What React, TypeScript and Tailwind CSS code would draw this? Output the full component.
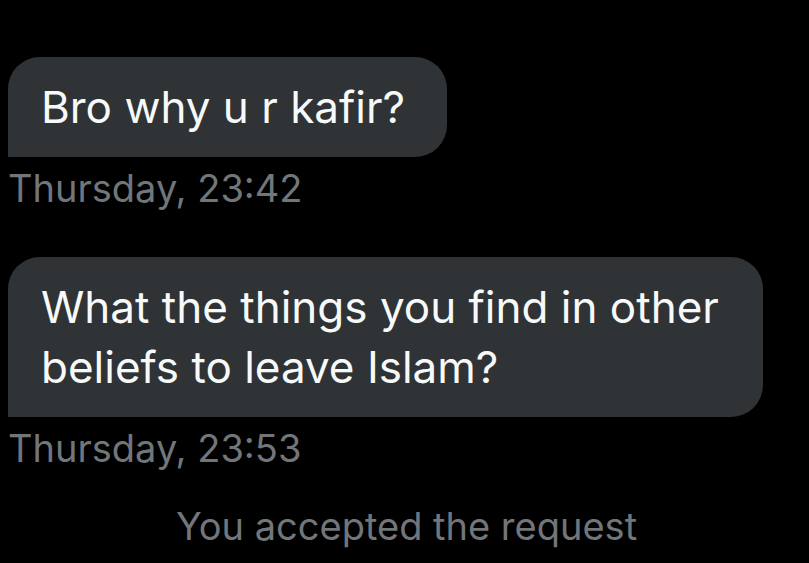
import React from 'react';

type Message = {
  text: string;
  time: string;
  width: string;
};

const messages: Message[] = [
  { text: 'Bro why u r kafir?', time: 'Thursday, 23:42', width: 'w-[439px]' },
  {
    text: 'What the things you find in other beliefs to leave Islam?',
    time: 'Thursday, 23:53',
    width: 'w-[755px]',
  },
];

function ReceivedMessage({ text, time, width }: Message) {
  return (
    <div className="flex flex-col items-start">
      <div
        className={`${width} rounded-[32px] rounded-bl-none bg-[#2f3336] px-[33px] py-[20px] text-[44px] leading-[60px] text-[#f7f9f9]`}
      >
        {text}
      </div>
      <div className="mt-[7px] text-[38px] leading-[48px] text-[#71767b]">{time}</div>
    </div>
  );
}

export default function App() {
  return (
    <div
      className="h-[563px] w-full overflow-hidden bg-black pl-[8px] pt-[57px]"
      style={{ fontFamily: 'Inter, "Noto Sans", sans-serif' }}
    >
      <div className="flex flex-col gap-[45px]">
        {messages.map((m) => (
          <ReceivedMessage key={m.time} {...m} />
        ))}
      </div>
      <div className="mt-[30px] pr-[4px] text-center text-[38px] leading-[48px] text-[#71767b]">
        You accepted the request
      </div>
    </div>
  );
}
